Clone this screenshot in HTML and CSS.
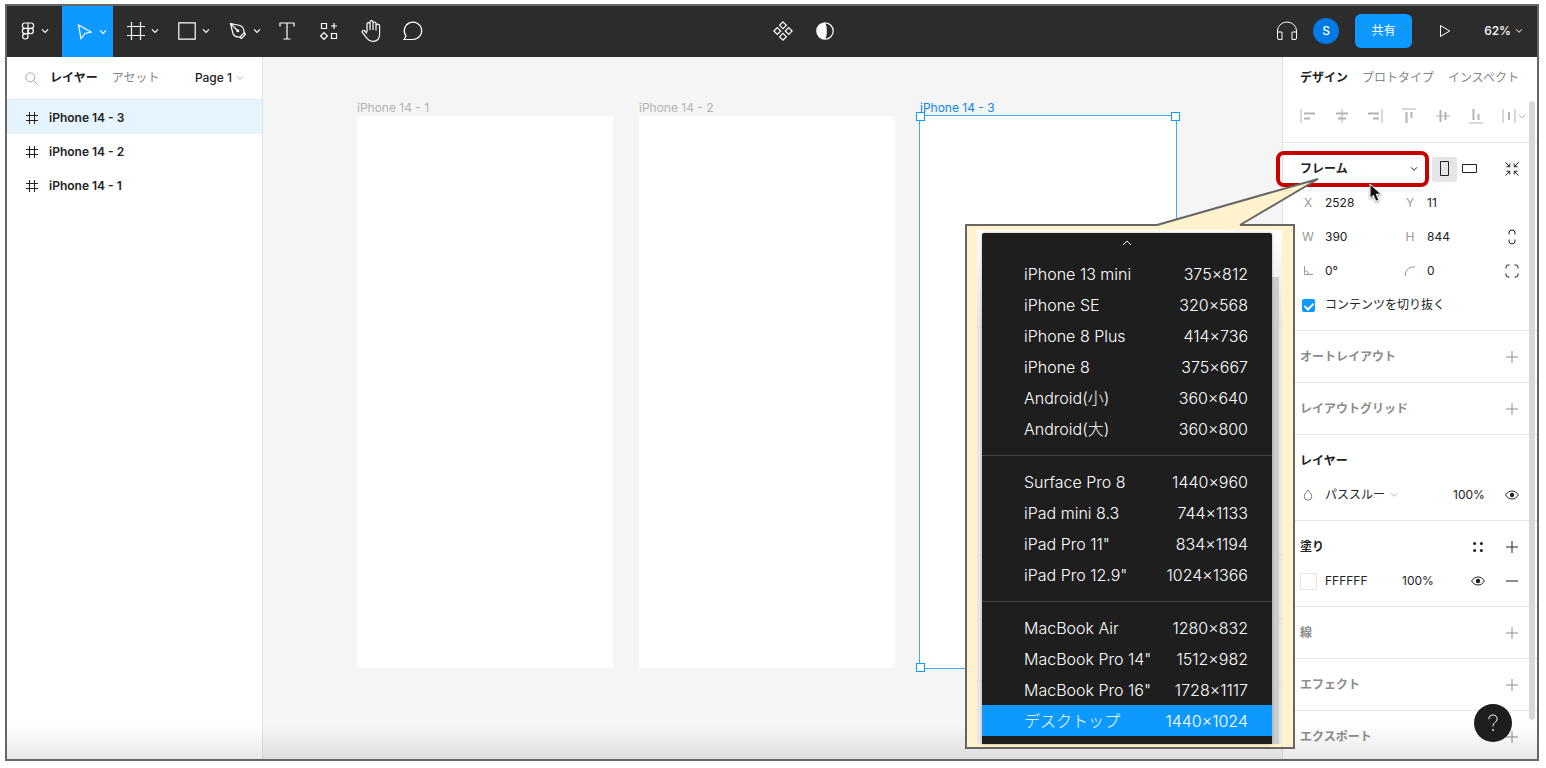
FILE: index.html
```html
<!DOCTYPE html>
<html lang="ja">
<head>
<meta charset="utf-8">
<meta name="viewport" content="width=device-width, initial-scale=1">
<title>iPhone 14</title>
<link rel="stylesheet" href="styles.css">
</head>
<body>
<svg class="defs" aria-hidden="true">
  <symbol id="chev" viewBox="0 0 8 6"><path d="M1 1.300l3 3 3-3"/></symbol>
  <symbol id="hash" viewBox="0 0 12 12"><path d="M3.500 0v12M8.500 0v12M0 3.500h12M0 8.500h12"/></symbol>
  <symbol id="plus" viewBox="0 0 12 12"><path d="M6 0v12M0 6h12"/></symbol>
  <symbol id="eye" viewBox="0 0 14 10"><path d="M.6 5C2 2.500 4.300 1 7 1s5 1.500 6.400 4C12 7.500 9.700 9 7 9S2 7.500 .6 5z"/><circle class="solid" cx="7" cy="5" r="2.200"/></symbol>
</svg>
<div class="app">
  <header class="toolbar">
    <div class="tools">
      <button class="tool logo" aria-label="メニュー"><svg width="14" height="18" viewBox="0 0 14 18"><path d="M7 1H4a2.600 2.600 0 000 5.300h3zM7 1h3a2.600 2.600 0 010 5.300H7zM7 6.300H4a2.600 2.600 0 000 5.300h3z"/><circle cx="9.700" cy="8.950" r="2.650"/><path d="M7 11.600H4a2.700 2.700 0 103 2.700z"/></svg><svg class="chev" width="8" height="6"><use href="#chev"/></svg></button>
      <button class="tool active" aria-label="移動"><svg width="16" height="18" viewBox="0 0 16 18"><path d="M1.500 2l12.500 7-6 1.500-4 5z"/></svg><svg class="chev" width="8" height="6"><use href="#chev"/></svg></button>
      <button class="tool" aria-label="フレーム"><svg width="18" height="18" viewBox="0 0 18 18"><path d="M4.500 0v18M13.500 0v18M0 4.500h18M0 13.500h18"/></svg><svg class="chev" width="8" height="6"><use href="#chev"/></svg></button>
      <button class="tool" aria-label="長方形"><svg width="18" height="18" viewBox="0 0 18 18"><path d="M.8.8h16.400v16.400H.8z"/></svg><svg class="chev" width="8" height="6"><use href="#chev"/></svg></button>
      <button class="tool" aria-label="ペン"><svg width="18" height="18" viewBox="0 0 18 18"><path d="M1.500 1.500l9.500 2c2.500 1 4 3.500 4 6.500l1.500 2.500-4 4-2.500-1.500C7 15 4.500 13.500 3.800 11zM1.500 1.500L8 8M10.500 15.500l5-5"/><circle class="solid" cx="8.800" cy="8.800" r="1.500"/></svg><svg class="chev" width="8" height="6"><use href="#chev"/></svg></button>
      <button class="tool single" aria-label="テキスト"><svg width="16" height="18" viewBox="0 0 16 18"><path d="M1 4.500V1h14v3.500M8 1v16M4.500 17h7"/></svg></button>
      <button class="tool single" aria-label="リソース"><svg width="18" height="18" viewBox="0 0 18 18"><path d="M1.500 1.500h5v5h-5zM11.500 11.500h5v5h-5zM14 1v6M11 4h6M4 10.600L7.400 14 4 17.400.6 14z"/></svg></button>
      <button class="tool single" aria-label="手のひら"><svg width="20" height="22" viewBox="0 0 20 22"><path d="M6 12V4.200a1.500 1.500 0 013 0V10M9 4V2.200a1.500 1.500 0 013 0V10M12 3.500a1.500 1.500 0 013 0V10.500M15 6a1.500 1.500 0 013.600 0V14c0 4.500-2.600 7.300-6.600 7.300-3 0-4.700-1-6.200-3.300L1.300 12.400c-.8-1.500 1-2.700 2.200-1.600L6 13.500"/></svg></button>
      <button class="tool single" aria-label="コメント"><svg width="20" height="20" viewBox="0 0 20 20"><path d="M1 18.500l2-3.500a8.700 8.700 0 1 1 7 3.500z"/></svg></button>
    </div>
    <div class="middle">
      <button class="tool single" aria-label="コンポーネント"><svg width="20" height="20" viewBox="0 0 20 20"><path d="M10 .9l3.400 3.400L10 7.700 6.600 4.300zM10 12.300l3.400 3.400-3.400 3.400-3.400-3.400zM4.300 6.600L7.700 10l-3.400 3.400L.9 10zM15.700 6.600l3.400 3.400-3.400 3.400-3.400-3.400z"/></svg></button>
      <button class="tool single" aria-label="マスク"><svg width="18" height="18" viewBox="0 0 18 18"><circle cx="9" cy="9" r="8.200"/><path class="solid" d="M9 .8a8.200 8.200 0 100 16.400c1.500-2.400 1.800-5 1.800-8.200S10.500 3.200 9 .8z"/></svg></button>
    </div>
    <div class="session">
      <button class="plain" aria-label="オーディオ"><svg width="22" height="20" viewBox="0 0 22 20"><path d="M1.500 17V10a9.500 9 0 0119 0v7M1.500 11H6v7.500H3A1.500 1.500 0 011.500 17zM20.500 11H16v7.500h3a1.500 1.500 0 001.500-1.500z"/></svg></button>
      <span class="avatar">S</span>
      <button class="share">共有</button>
      <button class="plain play" aria-label="プレビュー"><svg width="12" height="14" viewBox="0 0 12 14"><path d="M1.500 1.500L10.700 7l-9.200 5.500z"/></svg></button>
      <button class="plain zoom">62%<svg class="chev" width="8" height="6"><use href="#chev"/></svg></button>
    </div>
  </header>
  <main class="workspace">
    <aside class="layers">
      <div class="layers-head">
        <svg class="search" width="13" height="13" viewBox="0 0 13 13"><circle cx="5.300" cy="5.300" r="4.500"/><path d="M8.600 8.600l3.900 3.900"/></svg>
        <button class="tab on">レイヤー</button><button class="tab">アセット</button>
        <button class="page">Page 1<svg class="chev" width="8" height="6"><use href="#chev"/></svg></button>
      </div>
      <ul class="layer-list">
        <li class="selected"><svg width="12" height="12"><use href="#hash"/></svg>iPhone 14 - 3</li>
        <li><svg width="12" height="12"><use href="#hash"/></svg>iPhone 14 - 2</li>
        <li><svg width="12" height="12"><use href="#hash"/></svg>iPhone 14 - 1</li>
      </ul>
    </aside>
    <section class="canvas">
      <div class="artboard first"><span>iPhone 14 - 1</span></div>
      <div class="artboard second"><span>iPhone 14 - 2</span></div>
      <div class="artboard third"><span>iPhone 14 - 3</span><i class="handle tl"></i><i class="handle tr"></i><i class="handle bl"></i></div>
    </section>
    <aside class="inspector">
      <nav class="tabs"><button class="tab on">デザイン</button><button class="tab">プロトタイプ</button><button class="tab">インスペクト</button></nav>
      <div class="align">
        <button aria-label="左揃え"><svg width="16" height="16" viewBox="0 0 16 16"><path d="M1 1v14"/><path class="bar" d="M4 5.500h11M4 10.500h6"/></svg></button>
        <button aria-label="水平中央"><svg width="16" height="16" viewBox="0 0 16 16"><path d="M8 1v14"/><path class="bar" d="M2 5.500h12M4 10.500h8"/></svg></button>
        <button aria-label="右揃え"><svg width="16" height="16" viewBox="0 0 16 16"><path d="M15 1v14"/><path class="bar" d="M1 5.500h11M6 10.500h6"/></svg></button>
        <button aria-label="上揃え"><svg width="16" height="16" viewBox="0 0 16 16"><path d="M1 1h14"/><path class="bar" d="M5.500 4v11M10.500 4v6"/></svg></button>
        <button aria-label="垂直中央"><svg width="16" height="16" viewBox="0 0 16 16"><path d="M1 8h14"/><path class="bar" d="M5.500 2v12M10.500 4v8"/></svg></button>
        <button aria-label="下揃え"><svg width="16" height="16" viewBox="0 0 16 16"><path d="M1 15h14"/><path class="bar" d="M5.500 1v11M10.500 6v6"/></svg></button>
        <button aria-label="等間隔"><svg width="24" height="16" viewBox="0 0 24 16"><path d="M1 1v14M13 1v14M17 7l3 3 3-3"/><path class="bar" d="M7 4v8"/></svg></button>
      </div>
      <section class="group">
        <div class="frame-row">
          <div class="preset"><select aria-label="フレームの種類"><option>フレーム</option></select><svg class="chev" width="8" height="6"><use href="#chev"/></svg></div>
          <button class="orient on" aria-label="縦向き"><svg width="10" height="16" viewBox="0 0 10 16"><path d="M.5.5h8v14h-8z"/></svg></button>
          <button class="orient" aria-label="横向き"><svg width="16" height="10" viewBox="0 0 16 10"><path d="M.5.5h14v8H.5z"/></svg></button>
          <button class="icon fit" aria-label="サイズ自動調整"><svg width="14" height="14" viewBox="0 0 14 14"><path d="M.5.5l4 4M1.500 4.800h3.300V1.500M13.500.5l-4 4M12.500 4.800H9.200V1.500M.5 13.500l4-4M1.500 9.200h3.300v3.300M13.500 13.500l-4-4M12.500 9.200H9.200v3.300"/></svg></button>
        </div>
        <div class="row"><label for="x">X</label><input id="x" value="2528"><label for="y">Y</label><input id="y" value="11"></div>
        <div class="row"><label for="w">W</label><input id="w" value="390"><label for="h">H</label><input id="h" value="844"><button class="icon" aria-label="縦横比を固定"><svg width="8" height="16" viewBox="0 0 8 16"><path d="M1 5.500V4a3 3 0 016 0v1.500M1 10.500V12a3 3 0 006 0v-1.500"/></svg></button></div>
        <div class="row"><label for="r" aria-label="回転"><svg width="10" height="10" viewBox="0 0 10 10"><path d="M1.500 0v8.500H10M1.500 4.500a4 4 0 014 4"/></svg></label><input id="r" value="0°"><label for="c" aria-label="角の半径"><svg width="10" height="10" viewBox="0 0 10 10"><path d="M.5 10V8A7 7 0 017.500 1H10"/></svg></label><input id="c" value="0"><button class="icon" aria-label="個別の角"><svg width="14" height="14" viewBox="0 0 14 14"><path d="M1 4.500V3a2 2 0 012-2h1.500M9.500 1H11a2 2 0 012 2v1.500M13 9.500V11a2 2 0 01-2 2H9.500M4.500 13H3a2 2 0 01-2-2V9.500"/></svg></button></div>
        <div class="clip"><input type="checkbox" id="clip" checked><label for="clip">コンテンツを切り抜く</label></div>
      </section>
      <section class="group"><div class="title faint"><h2>オートレイアウト</h2><button class="icon" aria-label="追加"><svg width="12" height="12"><use href="#plus"/></svg></button></div></section>
      <section class="group"><div class="title faint"><h2>レイアウトグリッド</h2><button class="icon" aria-label="追加"><svg width="12" height="12"><use href="#plus"/></svg></button></div></section>
      <section class="group"><div class="title"><h2>レイヤー</h2></div>
        <div class="paint"><svg class="drop" width="10" height="12" viewBox="0 0 10 12"><path d="M5 1C3.500 3 1.300 5 1.300 7.500a3.700 3.700 0 007.400 0C8.700 5 6.500 3 5 1z"/></svg><button class="blend">パススルー<svg class="chev" width="8" height="6"><use href="#chev"/></svg></button><input class="percent" aria-label="レイヤーの不透明度" value="100%"><button class="icon" aria-label="表示"><svg width="14" height="10"><use href="#eye"/></svg></button></div></section>
      <section class="group"><div class="title"><h2>塗り</h2><button class="icon styles" aria-label="スタイル"><svg width="10" height="10" viewBox="0 0 10 10"><g class="solid"><circle cx="1.600" cy="1.600" r="1.500"/><circle cx="8.400" cy="1.600" r="1.500"/><circle cx="1.600" cy="8.400" r="1.500"/><circle cx="8.400" cy="8.400" r="1.500"/></g></svg></button><button class="icon" aria-label="塗りを追加"><svg width="12" height="12"><use href="#plus"/></svg></button></div>
        <div class="paint"><span class="swatch"></span><input class="hex" aria-label="色" value="FFFFFF"><input class="percent" aria-label="塗りの不透明度" value="100%"><button class="icon styles" aria-label="塗りを表示"><svg width="14" height="10"><use href="#eye"/></svg></button><button class="icon" aria-label="塗りを削除"><svg width="12" height="12" viewBox="0 0 12 12"><path d="M0 6h12"/></svg></button></div></section>
      <section class="group"><div class="title faint"><h2>線</h2><button class="icon" aria-label="追加"><svg width="12" height="12"><use href="#plus"/></svg></button></div></section>
      <section class="group"><div class="title faint"><h2>エフェクト</h2><button class="icon" aria-label="追加"><svg width="12" height="12"><use href="#plus"/></svg></button></div></section>
      <section class="group"><div class="title faint"><h2>エクスポート</h2><button class="icon" aria-label="追加"><svg width="12" height="12"><use href="#plus"/></svg></button></div></section>
      <div class="scroll-thumb"></div>
    </aside>
  </main>
  <div class="dock-shade"></div>
  <button class="help" aria-label="ヘルプ"><svg width="12" height="18" viewBox="0 0 12 18"><path d="M1.800 5.200C1.800 2.500 3.500 1 6 1s4.200 1.600 4.200 4c0 3-4.200 3.700-4.200 6.800v.7"/><circle class="solid" cx="6" cy="16" r=".9"/></svg></button>
  <div class="highlight"></div>
  <svg class="pointer" width="16" height="22" viewBox="0 0 16 22"><path d="M2 1v14.500l3.400-3.200 2.500 6 3-1.300-2.600-5.800h4.900z"/></svg>
  <div class="callout">
    <svg class="tail" width="170" height="52" viewBox="0 0 170 52"><path class="fill" d="M3 49L164 3 86 49v3H3z"/><path class="edge" d="M3 49L164 3 86 49"/></svg>
    <div class="backdrop">
      <div class="menu" role="menu">
        <button class="up" aria-label="上へ"><svg width="10" height="6" viewBox="0 0 10 6"><path d="M1 5l4-4 4 4"/></svg></button>
        <button role="menuitem"><span>iPhone 13 mini</span><span>375×812</span></button>
        <button role="menuitem"><span>iPhone SE</span><span>320×568</span></button>
        <button role="menuitem"><span>iPhone 8 Plus</span><span>414×736</span></button>
        <button role="menuitem"><span>iPhone 8</span><span>375×667</span></button>
        <button role="menuitem"><span>Android(小)</span><span>360×640</span></button>
        <button role="menuitem"><span>Android(大)</span><span>360×800</span></button>
        <hr>
        <button role="menuitem"><span>Surface Pro 8</span><span>1440×960</span></button>
        <button role="menuitem"><span>iPad mini 8.3</span><span>744×1133</span></button>
        <button role="menuitem"><span>iPad Pro 11"</span><span>834×1194</span></button>
        <button role="menuitem"><span>iPad Pro 12.9"</span><span>1024×1366</span></button>
        <hr>
        <button role="menuitem"><span>MacBook Air</span><span>1280×832</span></button>
        <button role="menuitem"><span>MacBook Pro 14"</span><span>1512×982</span></button>
        <button role="menuitem"><span>MacBook Pro 16"</span><span>1728×1117</span></button>
        <button role="menuitem" class="current"><span>デスクトップ</span><span>1440×1024</span></button>
      </div>
    </div>
  </div>
</div>
</body>
</html>
```

FILE: styles.css
```css
* { box-sizing: border-box; }
body {
  margin: 0;
  height: 100vh;
  padding: 4px 7px 7px 5px;
  background: #fff;
  color: #222;
  font: 12px/16px Inter, "Noto Sans CJK JP", sans-serif;
}
button, input, select {
  margin: 0;
  padding: 0;
  border: 0;
  background: none;
  color: inherit;
  font: inherit;
}
button { display: flex; align-items: center; white-space: nowrap; }
input { width: 100%; min-width: 0; }
svg { display: block; flex: none; fill: none; stroke: currentColor; overflow: visible; }
.solid { fill: currentColor; stroke: none; }
.defs { position: absolute; width: 0; height: 0; }

.app {
  position: relative;
  display: flex;
  flex-direction: column;
  height: 100%;
  border: 2px solid #666;
}

/* Toolbar */
.toolbar { display: flex; flex: none; height: 51px; padding-bottom: 1px; background: #2c2c2c; color: #fff; }
.tools, .session { display: flex; flex: 1; }
.middle { display: flex; margin-left: 77px; }
.tool { justify-content: center; gap: 6px; width: 51px; height: 100%; padding-left: 8px; stroke-width: 1.2; }
.tool.logo { width: 55px; padding-left: 0; }
.tool.single { width: 42px; padding-left: 0; }
.tool.active { height: 51px; background: #0d99ff; }
.session { justify-content: flex-end; align-items: center; padding-right: 14px; }
.avatar {
  width: 26px;
  margin: 0 16px 0 15px;
  border-radius: 50%;
  background: #007be5;
  font-weight: 500;
  line-height: 26px;
  text-align: center;
}
.share { justify-content: center; width: 57px; height: 34px; border-radius: 6px; background: #0d99ff; }
.play { margin: 0 33px 0 27px; }
.zoom { gap: 4px; font-weight: 500; }

/* Layers panel */
.workspace { display: flex; flex: 1; min-height: 0; }
.layers { flex: none; width: 256px; border-right: 1px solid #e2e2e2; background: #fff; }
.layers-head { display: flex; align-items: center; height: 43px; padding: 0 18px; border-bottom: 1px solid #e8e8e8; }
.search { margin-right: 12px; color: #aaa; }
.tab { color: #888; }
.tab.on { color: #222; font-weight: 700; }
.layers-head .tab { margin-right: 14px; }
.page { gap: 4px; margin-left: auto; font-weight: 500; }
.page .chev, .blend .chev { color: #b3b3b3; }
.layer-list { margin: 0; padding: 0; list-style: none; font-weight: 600; }
.layer-list li { display: flex; align-items: center; gap: 11px; height: 34px; padding: 1px 0 0 19px; }
.layer-list .selected { background: #e5f4ff; }

/* Canvas */
.canvas { position: relative; flex: 1; min-width: 0; overflow: hidden; background: #f5f5f5; }
.artboard { position: absolute; top: 59px; width: 256px; height: 552px; background: #fff; color: #b3b3b3; }
.artboard span { position: absolute; left: 0; bottom: 100%; white-space: nowrap; }
.first { left: 94px; }
.second { left: 376px; }
.third { left: 657px; outline: 1px solid #3daaff; color: #0d85e8; }
.handle { position: absolute; width: 9px; height: 9px; border: 1px solid #0d99ff; background: #fff; }
.tl { left: -4px; top: -4px; }
.tr { right: -4px; top: -4px; }
.bl { left: -4px; bottom: -4px; }

/* Inspector */
.inspector { position: relative; flex: none; width: 255px; overflow: hidden; border-left: 1px solid #e2e2e2; background: #fff; }
.tabs { display: flex; gap: 14px; height: 42px; padding-left: 17px; }
.align { display: flex; justify-content: space-between; height: 43px; padding: 0 11px 10px 17px; color: #b3b3b3; }
.align .bar { stroke-width: 2; }
.group { padding: 9px 13px 8px 17px; border-top: 1px solid #e5e5e5; }
.row, .title, .paint, .clip, .frame-row { display: flex; align-items: center; height: 34px; }
.row { display: grid; grid-template-columns: 25px 77px 25px 1fr 24px; }
.row label { display: flex; justify-content: center; width: 16px; color: #999; }
.icon { justify-content: center; flex: none; width: 24px; height: 24px; }
.preset { display: flex; flex: 1; align-items: center; }
.preset select { flex: 1; min-width: 0; height: 24px; appearance: none; font-weight: 700; }
.preset .chev { margin-right: 14px; }
.orient { justify-content: center; width: 25px; height: 25px; border-radius: 2px; }
.orient.on { background: #e5e5e5; }
.fit { margin-left: 18px; }
.clip { gap: 10px; padding-left: 2px; }
.clip input {
  display: flex;
  justify-content: center;
  flex: none;
  width: 13px;
  height: 13px;
  padding-top: 2px;
  appearance: none;
  border-radius: 2px;
  background: #0d99ff;
}
.clip input:checked::before {
  content: "";
  width: 4px;
  height: 7px;
  border: solid #fff;
  border-width: 0 2px 2px 0;
  transform: rotate(45deg);
}
.title h2 { flex: 1; margin: 0; font-size: 12px; line-height: 16px; font-weight: 700; }
.faint { color: #8c8c8c; }
.styles { margin-right: 10px; }
.drop { margin: 0 12px 0 3px; color: #777; }
.blend { flex: 1; gap: 5px; }
.paint .percent { width: 47px; }
.swatch { width: 17px; height: 17px; margin-right: 8px; border: 1px solid #e5e5e5; flex: none; }
.paint .hex { flex: 1; }
.hex + .percent { width: 64px; }
.scroll-thumb { position: absolute; top: 44px; right: 2px; bottom: 39px; width: 6px; border-radius: 3px; background: #d8d8d8; }

/* Overlays */
.dock-shade { position: absolute; inset: auto 0 0; height: 34px; background: linear-gradient(transparent, rgba(0, 0, 0, .09)); pointer-events: none; }
.help { position: absolute; right: 25px; bottom: 17px; justify-content: center; width: 38px; height: 38px; border-radius: 50%; background: #1e1e1e; color: #fff; }
.highlight { position: absolute; top: 145px; right: 108px; width: 153px; height: 36px; border: 4px solid #c80000; border-radius: 8px; pointer-events: none; }
.pointer { position: absolute; top: 177px; right: 153px; fill: #111; stroke: #fff; filter: drop-shadow(0 1px 1px rgba(0, 0, 0, .4)); }

.callout { position: absolute; top: 218px; right: 242px; width: 330px; padding: 4px 11px 3px 10px; border: 2px solid #666; background: #fff2cc; }
.tail { position: absolute; right: -31px; bottom: 100%; margin-bottom: -2px; }
.tail .fill { fill: #fff2cc; stroke: none; }
.tail .edge { stroke: #666; stroke-width: 2; }
.backdrop {
  padding: 3px 10px 0 5px;
  background:
    linear-gradient(#ccc, #ccc) right 3px top 47px / 7px 100% no-repeat,
    linear-gradient(#ddd, #ddd) 0 96px / 100% 1px no-repeat,
    linear-gradient(#ddd, #ddd) 0 324px / 100% 1px no-repeat,
    linear-gradient(#ddd, #ddd) 0 388px / 100% 1px no-repeat,
    linear-gradient(#ddd, #ddd) 0 451px / 100% 1px no-repeat,
    linear-gradient(#fff, #e8e8e8 90px);
}
.menu { padding-bottom: 8px; border-radius: 2px 2px 0 0; background: #1e1e1e; color: #fff; box-shadow: 0 0 3px rgba(0, 0, 0, .3); font-size: 16px; font-weight: 300; line-height: 30px; }
.menu button { justify-content: space-between; width: 100%; height: 31px; padding: 1px 24px 0 42px; }
.menu .up { justify-content: center; height: 25px; padding: 0 0 6px; }
.menu .current { background: #0d99ff; }
.menu hr { height: 1px; margin: 11px 0 10px; border: 0; background: #444; }
```
